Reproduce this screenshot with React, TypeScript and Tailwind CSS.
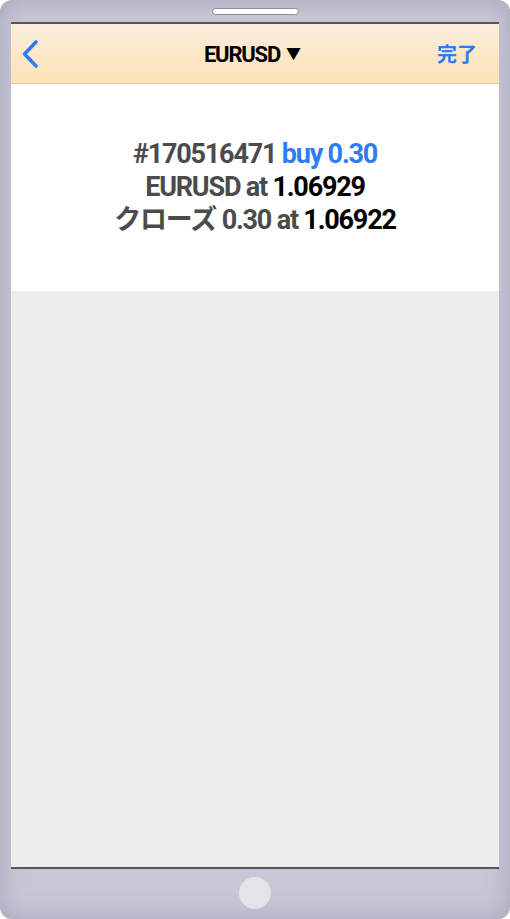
import React from 'react';

const font = { fontFamily: 'Roboto, "Noto Sans CJK JP", sans-serif' };

export default function App() {
    return (
        <div className="w-[510px] h-[919px] bg-white" style={font}>
            <div className="w-[510px] h-[919px] rounded-[12px] bg-[#c7c7d5] shadow-[inset_0_0_24px_rgba(160,160,185,0.9)] px-[11px] flex flex-col">
                <div className="h-[22px] flex justify-center pt-[8px]">
                    <div className="w-[87px] h-[7px] rounded-full bg-white border border-[#8e8e96]" />
                </div>

                <div className="flex-1 flex flex-col border-t-2 border-b-2 border-[#55555b] bg-[#ededed]">
                    <div className="h-[60px] shrink-0 flex items-center justify-between pl-[9px] pr-[11px] bg-gradient-to-b from-[#fbeedd] to-[#fde2b5] border-b border-[#d8cab2]">
                        <svg width="20" height="30" viewBox="0 0 20 30">
                            <path d="M16 3 L4.5 15 L16 27" fill="none" stroke="#2f7bf5" strokeWidth="3.6" strokeLinecap="round" strokeLinejoin="round" />
                        </svg>
                        <div className="flex items-center gap-[6px] text-[22px] font-bold text-black tracking-[-1.2px] ml-[28px] mt-[2px]">
                            <span>EURUSD</span>
                            <span className="text-[15px] tracking-normal">▼</span>
                        </div>
                        <div className="text-[20px] font-bold text-[#2f7bf5] pr-[11px] mt-[2px]">完了</div>
                    </div>

                    <div className="h-[207px] shrink-0 bg-white flex flex-col items-center pt-[54px] text-[27px] leading-[33px] font-bold text-[#4b4b4b] tracking-[-1.2px]">
                        <div>
                            #170516471 <span className="text-[#2f7bf5]">buy 0.30</span>
                        </div>
                        <div>
                            EURUSD at <span className="text-black">1.06929</span>
                        </div>
                        <div>
                            クローズ 0.30 at <span className="text-black">1.06922</span>
                        </div>
                    </div>
                </div>

                <div className="h-[50px] flex justify-center pt-[8px]">
                    <div className="w-[32px] h-[32px] rounded-full bg-[#e3e3ea]" />
                </div>
            </div>
        </div>
    );
}
